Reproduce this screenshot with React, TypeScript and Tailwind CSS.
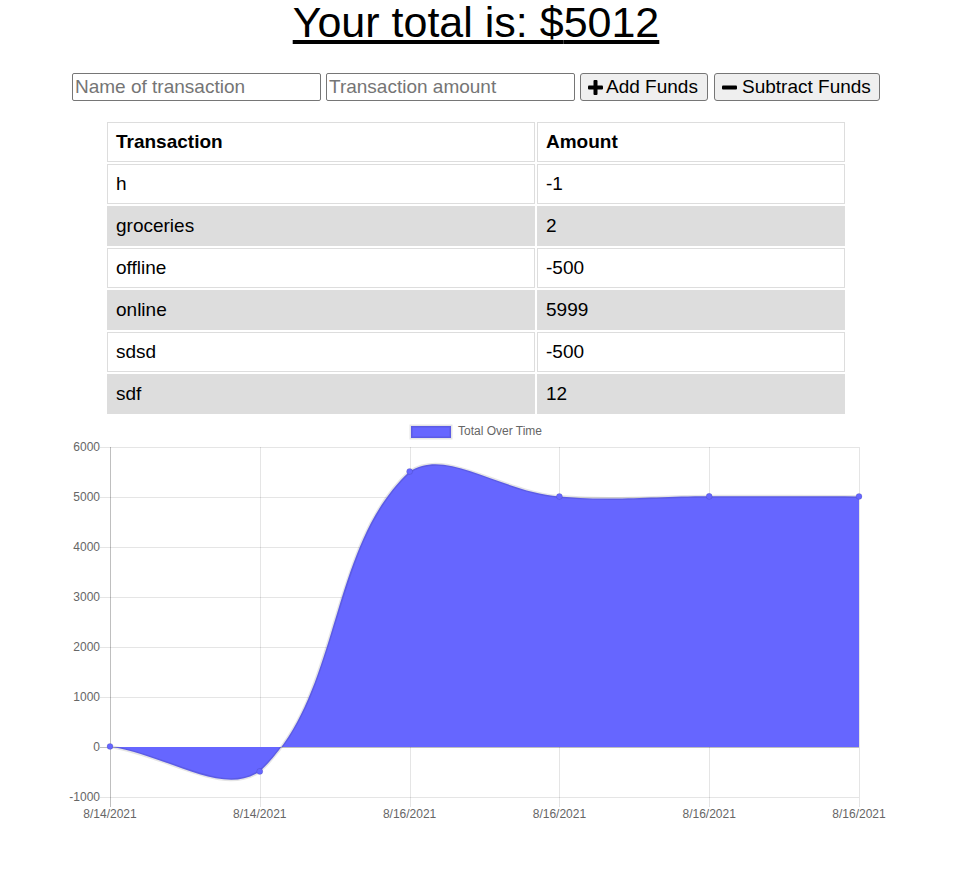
import React from 'react'

type Tx = { name: string; value: number }

const transactions: Tx[] = [
  { name: 'h', value: -1 },
  { name: 'groceries', value: 2 },
  { name: 'offline', value: -500 },
  { name: 'online', value: 5999 },
  { name: 'sdsd', value: -500 },
  { name: 'sdf', value: 12 },
]

// chart area in page coordinates
const area = { left: 110, right: 859, top: 447, bottom: 797 }
const yOf = (v: number) => 747 - v * 0.05
const yTicks = [6000, 5000, 4000, 3000, 2000, 1000, 0, -1000]
const labels = ['8/14/2021', '8/14/2021', '8/16/2021', '8/16/2021', '8/16/2021', '8/16/2021']

function buildPoints() {
  let sum = 0
  const totals = [...transactions].reverse().map(t => (sum += t.value))
  const step = (area.right - area.left) / (totals.length - 1)
  return totals.map((v, i) => ({ x: area.left + i * step, y: yOf(v) }))
}

const clamp = (v: number, a: number, b: number) => Math.min(Math.max(v, a), b)

function curvePath(pts: { x: number; y: number }[], t = 0.4) {
  const cps = pts.map((cur, i) => {
    const prev = pts[i - 1] || cur
    const next = pts[i + 1] || cur
    const d01 = Math.hypot(cur.x - prev.x, cur.y - prev.y)
    const d12 = Math.hypot(next.x - cur.x, next.y - cur.y)
    const s01 = d01 / (d01 + d12) || 0
    const s12 = d12 / (d01 + d12) || 0
    const fa = t * s01
    const fb = t * s12
    return {
      p: {
        x: clamp(cur.x - fa * (next.x - prev.x), area.left, area.right),
        y: clamp(cur.y - fa * (next.y - prev.y), area.top, area.bottom),
      },
      n: {
        x: clamp(cur.x + fb * (next.x - prev.x), area.left, area.right),
        y: clamp(cur.y + fb * (next.y - prev.y), area.top, area.bottom),
      },
    }
  })
  let d = `M${pts[0].x},${pts[0].y}`
  for (let i = 1; i < pts.length; i++) {
    d += ` C${cps[i - 1].n.x},${cps[i - 1].n.y} ${cps[i].p.x},${cps[i].p.y} ${pts[i].x},${pts[i].y}`
  }
  return d
}

function PlusIcon() {
  return (
    <svg width="15" height="15" viewBox="0 0 15 15" className="shrink-0">
      <rect x="5.5" y="0" width="4" height="15" rx="1" fill="#000" />
      <rect x="0" y="5.5" width="15" height="4" rx="1" fill="#000" />
    </svg>
  )
}

function MinusIcon() {
  return (
    <svg width="15" height="15" viewBox="0 0 15 15" className="shrink-0">
      <rect x="0" y="5.5" width="15" height="4" rx="1" fill="#000" />
    </svg>
  )
}

function Chart() {
  const pts = buildPoints()
  const line = curvePath(pts)
  const fill = `${line} L${pts[pts.length - 1].x},747 L${pts[0].x},747 Z`
  const font = 'Liberation Sans, Arial, sans-serif'
  return (
    <svg width="952" height="424" viewBox="0 416 952 424" className="block">
      {/* legend */}
      <rect x="411" y="426" width="40" height="12" fill="#6666ff" stroke="rgba(0,0,0,0.1)" strokeWidth="3" />
      <text x="458" y="435" fontSize="12" fill="#666" fontFamily={font}>Total Over Time</text>

      {/* grid */}
      {yTicks.map(v => (
        <g key={v}>
          <line
            x1="100"
            x2={area.right}
            y1={yOf(v) + 0.5}
            y2={yOf(v) + 0.5}
            stroke={v === 0 ? 'rgba(0,0,0,0.25)' : 'rgba(0,0,0,0.1)'}
          />
          <text x="100" y={yOf(v) + 4} textAnchor="end" fontSize="12" fill="#666" fontFamily={font}>
            {v}
          </text>
        </g>
      ))}
      {pts.map((p, i) => (
        <g key={i}>
          <line
            x1={Math.round(p.x) + 0.5}
            x2={Math.round(p.x) + 0.5}
            y1={area.top}
            y2={area.bottom + 10}
            stroke={i === 0 ? 'rgba(0,0,0,0.25)' : 'rgba(0,0,0,0.1)'}
          />
          <text x={p.x} y="818" textAnchor="middle" fontSize="12" fill="#666" fontFamily={font}>
            {labels[i]}
          </text>
        </g>
      ))}

      {/* dataset */}
      <path d={fill} fill="#6666ff" />
      <path d={line} fill="none" stroke="rgba(0,0,0,0.1)" strokeWidth="3" />
      {pts.map((p, i) => (
        <circle key={i} cx={p.x} cy={p.y} r="3" fill="#6666ff" stroke="rgba(0,0,0,0.1)" strokeWidth="1" />
      ))}
    </svg>
  )
}

export default function App() {
  const total = transactions.reduce((s, t) => s + t.value, 0)
  return (
    <div className="w-[952px] bg-white text-black font-['Liberation_Sans',Arial,sans-serif]">
      <h1 className="h-[45px] text-center text-[43px] leading-[45px] font-normal underline">
        Your total is: ${total}
      </h1>

      <div className="mt-[28px] flex justify-center items-center gap-[5px]">
        <input
          placeholder="Name of transaction"
          className="w-[249px] h-[28px] border border-[#767676] rounded-[2px] px-[2px] text-[19px] placeholder:text-[#757575] outline-none"
        />
        <input
          placeholder="Transaction amount"
          className="w-[249px] h-[28px] border border-[#767676] rounded-[2px] px-[2px] text-[19px] placeholder:text-[#757575] outline-none"
        />
        <button className="w-[128px] h-[28px] border border-[#767676] rounded-[3px] bg-[#efefef] px-[7px] flex items-center gap-[3px] text-[19px]">
          <PlusIcon />
          Add Funds
        </button>
        <button className="ml-[1px] w-[166px] h-[28px] border border-[#767676] rounded-[3px] bg-[#efefef] px-[7px] flex items-center gap-[5px] text-[19px]">
          <MinusIcon />
          Subtract Funds
        </button>
      </div>

      <table className="mt-[19px] mx-auto w-[742px] border-separate border-spacing-[2px] text-[19px]">
        <thead>
          <tr>
            <th className="w-[428px] h-[40px] border border-[#ddd] px-[8px] text-left font-bold">Transaction</th>
            <th className="w-[308px] h-[40px] border border-[#ddd] px-[8px] text-left font-bold">Amount</th>
          </tr>
        </thead>
        <tbody>
          {transactions.map((t, i) => (
            <tr key={t.name} className={i % 2 === 1 ? 'bg-[#ddd]' : ''}>
              <td className="h-[40px] border border-[#ddd] px-[8px]">{t.name}</td>
              <td className="h-[40px] border border-[#ddd] px-[8px]">{t.value}</td>
            </tr>
          ))}
        </tbody>
      </table>

      <Chart />
    </div>
  )
}
